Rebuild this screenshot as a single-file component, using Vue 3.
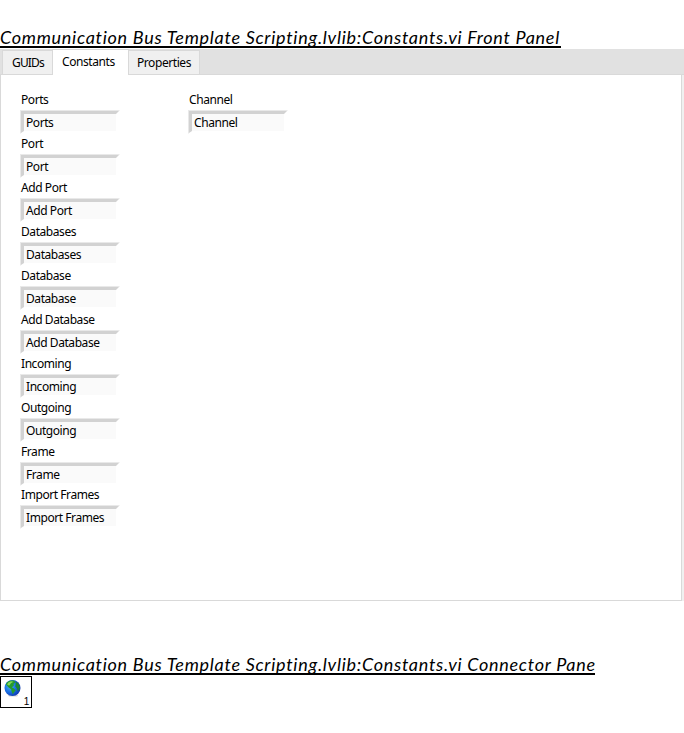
<script setup>
const columns = [
  ['Ports', 'Port', 'Add Port', 'Databases', 'Database', 'Add Database', 'Incoming', 'Outgoing', 'Frame', 'Import Frames'],
  ['Channel'],
]
</script>

<template>
  <main class="page">
    <h2 class="title front">Communication Bus Template Scripting.lvlib:Constants.vi Front Panel</h2>
    <section class="panel">
      <nav class="tabs">
        <div class="tab guids">GUIDs</div>
        <div class="tab active">Constants</div>
        <div class="tab props">Properties</div>
      </nav>
      <div class="body">
        <div v-for="(names, i) in columns" :key="i" class="column">
          <div v-for="name in names" :key="name" class="control">
            <label>{{ name }}</label>
            <div class="bevel"><div class="field">{{ name }}</div></div>
          </div>
        </div>
      </div>
    </section>
    <h2 class="title connector">Communication Bus Template Scripting.lvlib:Constants.vi Connector Pane</h2>
    <div class="icon">
      <svg width="30" height="30" viewBox="0 0 30 30">
        <defs>
          <radialGradient id="sea" cx="0.35" cy="0.4" r="0.7">
            <stop offset="0" stop-color="#4cb4f4" />
            <stop offset="0.5" stop-color="#1a70e4" />
            <stop offset="1" stop-color="#0c34ac" />
          </radialGradient>
        </defs>
        <ellipse cx="12" cy="18.4" rx="5" ry="1.2" fill="#d4d4d8" />
        <circle cx="11.5" cy="11" r="8" fill="url(#sea)" />
        <path d="M4.8 7 7 4.5 10 3.4l3.2.2 1.4 1.8-2 1.3.2 2-2 1.6 2.2 1.3 1.7 1.8-1.8 2-1 2-1.3-2.8-.4-2.3-2.6-1.9L5.8 8.5z" fill="#249b2d" />
        <path d="M14.8 4.4l2.6 2 1.5 3.4-.8 3.4-1.5.6-.7-2.6-1.6-1.6.4-2.2z" fill="#1c8730" />
        <path d="M7 5.7l3-1.4 2.4.5-2.5 1.4L8.4 8.4 6.2 8z" fill="#84d65a" />
      </svg>
      <span class="number">1</span>
    </div>
  </main>
</template>

<style>
body {
  margin: 0;
  background: #fff;
}
</style>

<style scoped>
.page {
  width: 684px;
  height: 733px;
  box-sizing: border-box;
  padding-top: 26px;
  overflow: hidden;
  color: #000;
  font-family: "Noto Sans", "Open Sans", sans-serif;
  font-size: 12px;
  letter-spacing: -0.43px;
}

.title {
  margin: 0;
  box-sizing: border-box;
  height: 22px;
  border-bottom: 2px solid #000;
  white-space: nowrap;
  font: italic 400 18px/23px Lato, sans-serif;
  letter-spacing: 0.72px;
}

.front {
  width: 561px;
}

.connector {
  width: 595px;
  margin-top: 52px;
}

.panel {
  position: relative;
  margin-top: 1px;
}

.tabs {
  display: flex;
  align-items: flex-end;
  box-sizing: border-box;
  height: 26px;
  padding-left: 2px;
  background: #e1e1e1;
  border-bottom: 1px solid #d9d9d9;
}

.tab {
  box-sizing: border-box;
  height: 24px;
  border: 1px solid #d9d9d9;
  border-bottom: 0;
  background: #f0f0f0;
  line-height: 23px;
  white-space: nowrap;
}

.guids {
  width: 50px;
  padding-left: 9px;
  border-right: 0;
  letter-spacing: -0.85px;
}

.active {
  width: 77px;
  height: 26px;
  margin-bottom: -1px;
  padding-left: 9px;
  background: #fff;
}

.props {
  width: 71px;
  padding-left: 8px;
  border-left: 0;
}

.body {
  display: flex;
  gap: 68px;
  box-sizing: border-box;
  width: 682px;
  height: 526px;
  padding: 17px 0 0 19px;
  border: solid #d9d9d9;
  border-width: 0 1px 1px;
  box-shadow: 2px 0 #f0f0f0;
}

.column {
  width: 100px;
}

.control {
  height: 44px;
  white-space: nowrap;
}

.control:nth-child(10) {
  margin-top: -1px;
}

.control label {
  display: block;
  height: 18px;
  padding-left: 1px;
  line-height: 16px;
}

.bevel {
  box-sizing: border-box;
  width: 100px;
  height: 24px;
  border: 1px solid;
  border-color: #e9e9e9 #fff #fff #e9e9e9;
}

.field {
  box-sizing: border-box;
  height: 22px;
  padding-left: 2px;
  border: solid;
  border-width: 3px 3px 2px;
  border-color: #d2d2d2 #fff #fff #d2d2d2;
  background: #fafafa;
  line-height: 17px;
}

.icon {
  position: relative;
  box-sizing: border-box;
  width: 32px;
  height: 32px;
  margin-top: 1px;
  border: 1px solid #000;
}

.icon svg {
  display: block;
}

.number {
  position: absolute;
  right: 2px;
  bottom: 0;
  font: 10px/10px "Liberation Sans", sans-serif;
}
</style>
